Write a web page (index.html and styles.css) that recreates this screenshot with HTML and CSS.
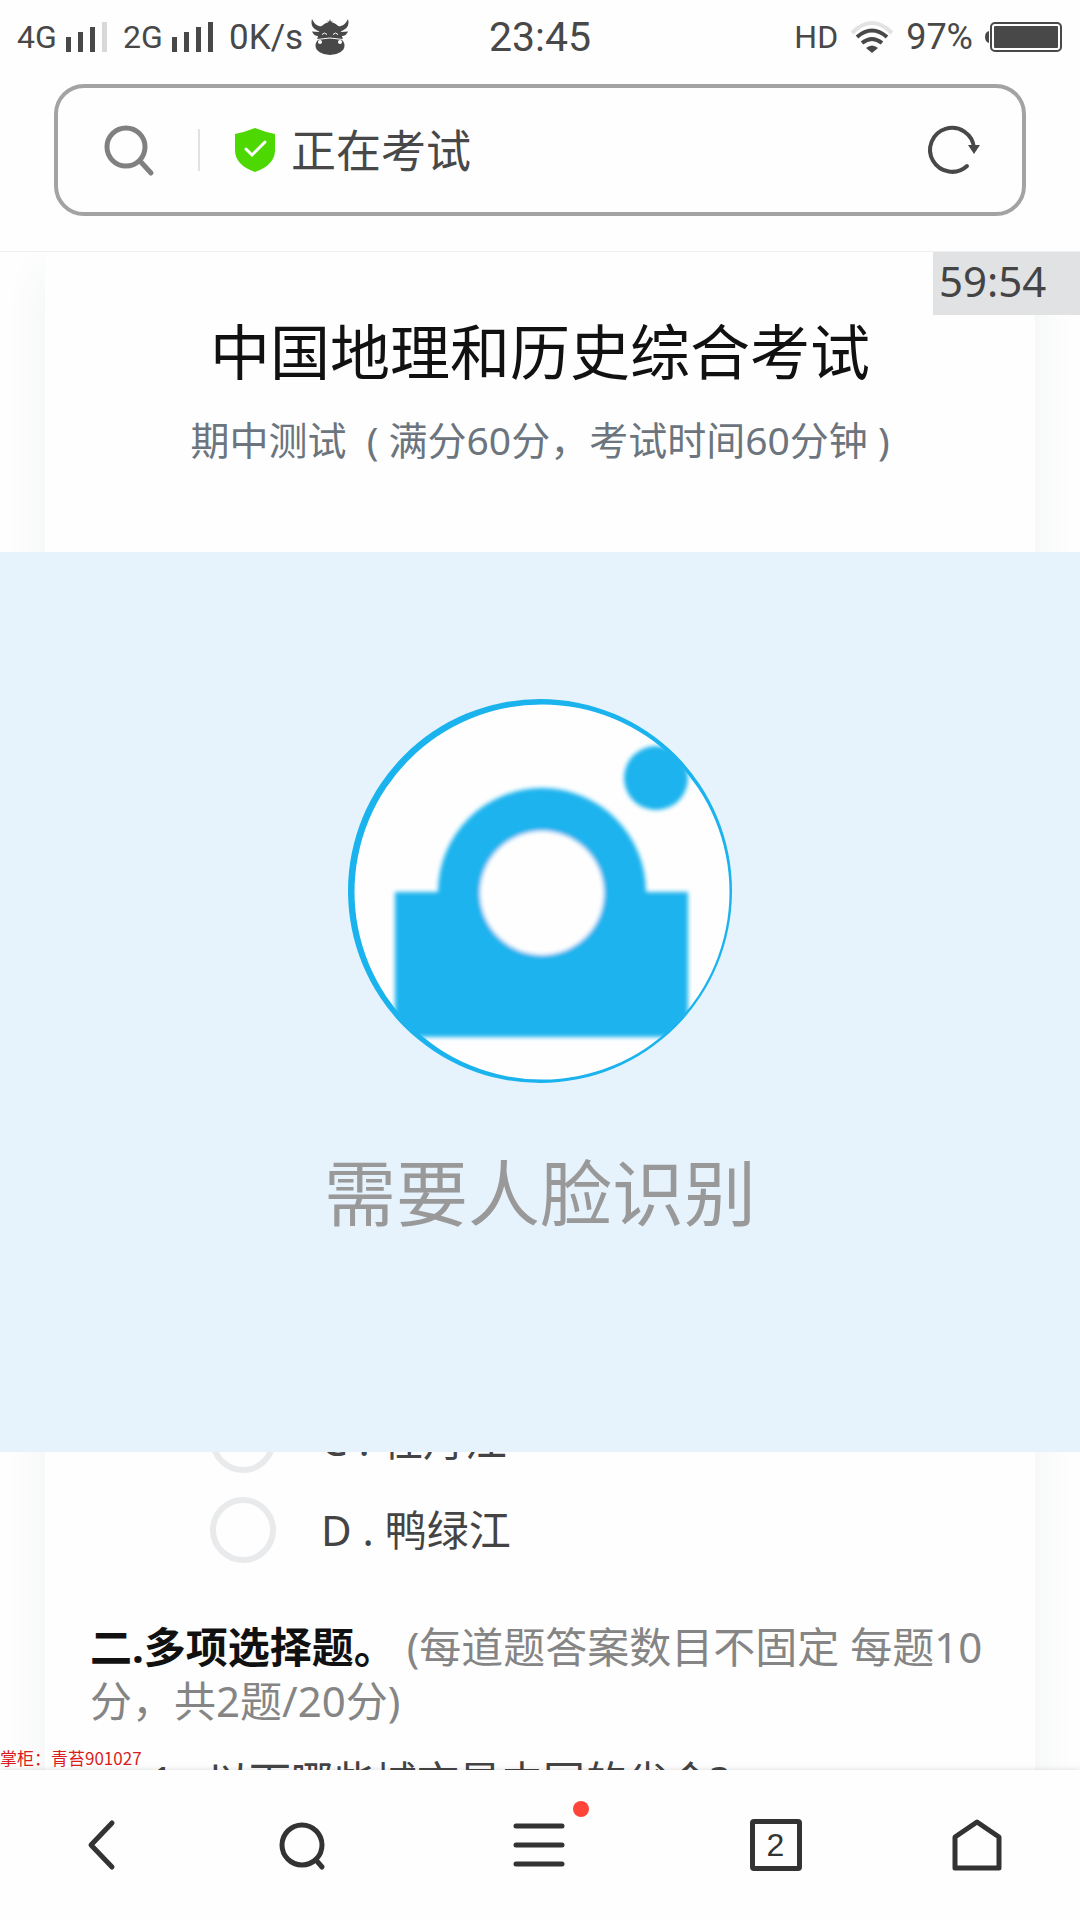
FILE: index.html
```html
<!DOCTYPE html>
<html lang="zh-CN">
<head>
<meta charset="utf-8">
<meta name="viewport" content="width=device-width, initial-scale=1">
<title>正在考试</title>
<link rel="stylesheet" href="styles.css">
</head>
<body>
<div class="page">
  <header class="browser">
    <div class="status">
      <div class="status-left">
        <span class="net">4G</span>
        <svg class="bars" viewBox="0 0 42 30" aria-hidden="true"><path d="M0 15h5v15H0zM12 10h5v20h-5zM24 5h5v25h-5z"/><path class="faint" d="M36 0h5v30h-5z"/></svg>
        <span class="net">2G</span>
        <svg class="bars" viewBox="0 0 42 30" aria-hidden="true"><path d="M0 15h5v15H0zM12 10h5v20h-5zM24 5h5v25h-5zM36 0h5v30h-5z"/></svg>
        <span class="speed-down">0K/s</span>
        <svg class="cow" viewBox="0 0 38 36" aria-hidden="true">
          <path d="M1 0C-1 7 3 11 10 13L13 7C7 8 4 6 1 0ZM37 0C39 7 35 11 28 13L25 7C31 8 34 6 37 0Z"/>
          <path d="M9 9Q13 4 17 3.500L16.500 1.500L18 3L19 0L20 3L21.500 1.500L21 3.500Q25 4 29 9L30 13L37 12.500Q35 17 31 17L32 21H6L7 17Q3 17 1 12.500L8 13Z"/>
          <ellipse cx="19" cy="26.500" rx="14.500" ry="9.500"/>
          <path class="cow-line" d="M11 15.500q2.500-3 5 0M22 15.500q2.500-3 5 0M6 20.500q13-3 26 0"/>
          <circle class="cow-hole" cx="9" cy="23" r="2"/><circle class="cow-hole" cx="29" cy="23" r="2"/>
        </svg>
      </div>
      <time class="clock">23:45</time>
      <div class="status-right">
        <span class="hd">HD</span>
        <svg class="wifi" viewBox="0 0 44 32" aria-hidden="true">
          <path class="arc faint-line" d="M2 12Q22-8 42 12"/>
          <path class="arc" d="M7 16Q22 3 37 16M12 22Q22 14 32 22"/>
          <path d="M16 27q6-5 12 0l-6 5z"/>
        </svg>
        <span class="charge">97%</span>
        <svg class="battery" viewBox="0 0 78 30" aria-hidden="true"><path d="M4 9v12Q0 20 0 15T4 9z"/><rect class="shell" x="6" y="1" width="70" height="28" rx="4"/><rect x="9" y="4" width="64" height="22" rx="1"/></svg>
      </div>
    </div>
    <form class="address">
      <button class="icon-btn" type="button" aria-label="搜索">
        <svg class="find" viewBox="0 0 50 50" aria-hidden="true"><circle cx="22" cy="22" r="19"/><path d="M36 36l11 12"/></svg>
      </button>
      <span class="divider"></span>
      <svg class="shield" viewBox="0 0 40 44" aria-hidden="true"><path class="shield-body" d="M20 0Q30 4 40 6V22Q40 37 20 44Q0 37 0 22V6Q10 4 20 0Z"/><path class="tick" d="M11 21l6 6L30 14"/></svg>
      <input class="address-text" type="text" value="正在考试" aria-label="地址栏">
      <button class="icon-btn" type="button" aria-label="刷新">
        <svg class="reload" viewBox="0 0 52 48" aria-hidden="true"><path class="ring" d="M39 40A22 22 0 1 1 46 22"/><path class="head" d="M40 19h12l-6 9z"/></svg>
      </button>
    </form>
  </header>

  <main class="viewport">
    <div class="timer">59:54</div>
    <article class="paper">
      <header class="paper-head">
        <h1 class="title">中国地理和历史综合考试</h1>
        <p class="subtitle">期中测试 &nbsp;( 满分60分，考试时间60分钟 )</p>
      </header>

      <section class="face">
        <svg class="camera" viewBox="0 0 384 384" aria-hidden="true">
          <defs>
            <clipPath id="disc"><circle cx="192" cy="192" r="192"/></clipPath>
            <filter id="soft"><feGaussianBlur stdDeviation="2"/></filter>
          </defs>
          <circle class="blue" cx="192" cy="192" r="192"/>
          <circle class="white" cx="194" cy="193" r="187.5"/>
          <g clip-path="url(#disc)"><g filter="url(#soft)">
            <path class="blue" d="M47 193H90A104 104 0 0 1 298 193H340V338H47Z"/>
            <circle class="white" cx="194" cy="194" r="62"/>
            <circle class="blue" cx="308" cy="79" r="32"/>
          </g></g>
        </svg>
        <p class="face-text">需要人脸识别</p>
      </section>

      <section class="options">
        <label class="option"><input class="radio" type="radio" name="q1"><span class="option-text">C . 牡丹江</span></label>
        <label class="option"><input class="radio" type="radio" name="q1"><span class="option-text">D . 鸭绿江</span></label>
      </section>

      <h2 class="part"><strong class="part-name">二.多项选择题。</strong> (每道题答案数目不固定 每题10分，共2题/20分)</h2>
      <p class="question">1 . 以下哪些城市是中国的省会?</p>
    </article>
    <div class="mark">掌柜：青苔901027</div>
  </main>

  <nav class="toolbar">
    <button class="tool" type="button" aria-label="返回"><svg class="tool-icon" viewBox="0 0 54 54" aria-hidden="true"><path d="M37 5L16 27L37 49"/></svg></button>
    <button class="tool" type="button" aria-label="搜索"><svg class="tool-icon" viewBox="0 0 54 54" aria-hidden="true"><circle cx="27" cy="27" r="20"/><path d="M41 42l6 7"/></svg></button>
    <button class="tool" type="button" aria-label="菜单"><span class="menu"><svg class="tool-icon" viewBox="0 0 54 54" aria-hidden="true"><path d="M4 8h46M4 27h46M4 46h46"/></svg><span class="dot"></span></span></button>
    <button class="tool" type="button" aria-label="标签页"><span class="tabs">2</span></button>
    <button class="tool" type="button" aria-label="主页"><svg class="tool-icon" viewBox="0 0 54 54" aria-hidden="true"><path d="M5 50V19L27 4L49 19V50Z"/></svg></button>
  </nav>
</div>
</body>
</html>
```
FILE: styles.css
```css
* { box-sizing: border-box; }

body {
  margin: 0;
  background: #fefefe;
  color: #444;
  font-family: "Noto Sans", "Noto Sans CJK SC", sans-serif;
}

h1, h2, p { margin: 0; font-weight: 400; }

button {
  display: grid;
  place-items: center;
  padding: 0;
  border: 0;
  background: none;
  color: inherit;
}

svg { display: block; flex: none; overflow: visible; }

.page { display: flex; flex-direction: column; height: 100vh; }

.browser { border-bottom: 1px solid #eee; padding-bottom: 35px; }

/* status bar */
.status {
  display: grid;
  grid-template-columns: 1fr auto 1fr;
  align-items: center;
  height: 76px;
  margin-bottom: 8px;
  padding: 0 17px 2px 17px;
  color: #484848;
  fill: #484848;
  font-family: Roboto, sans-serif;
}
.status-left, .status-right { display: flex; align-items: center; }
.status-right { justify-content: flex-end; gap: 12px; }
.net { font-size: 32px; width: 49px; }
.bars { width: 42px; height: 30px; margin-right: 15px; }
.faint { fill: #d8d8d8; }
.speed-down { font-size: 35px; }
.charge { font-size: 36px; }
.cow { width: 38px; height: 36px; margin-left: 8px; }
.cow-line { fill: none; stroke: #fefefe; stroke-width: 1; }
.cow-hole { fill: #fefefe; }
.clock { font-size: 41px; }
.hd { font-size: 32px; }
.wifi { width: 44px; height: 32px; }
.arc { fill: none; stroke: #484848; stroke-width: 4; }
.faint-line { stroke: #e2e2e2; }
.battery { width: 78px; height: 30px; }
.shell { fill: none; stroke: #484848; stroke-width: 2; }

/* address bar */
.address {
  display: flex;
  align-items: center;
  height: 132px;
  margin: 0 54px;
  padding: 0 42px 0 46px;
  border: 4px solid #a3a3a3;
  border-radius: 30px;
}
.find { width: 50px; height: 50px; fill: none; stroke: #808080; stroke-width: 5; stroke-linecap: round; }
.divider { width: 2px; height: 42px; margin: 0 35px 0 44px; background: #e2e2e2; }
.shield { width: 40px; height: 44px; }
.shield-body { fill: #4cd800; }
.tick { fill: none; stroke: #fff; stroke-width: 3; stroke-linecap: round; }
.address-text {
  flex: 1;
  min-width: 0;
  height: 70px;
  margin: 0 16px;
  padding: 0 0 4px;
  border: 0;
  outline: 0;
  background: none;
  color: #484848;
  font: 45px/66px "Noto Sans CJK SC", sans-serif;
}
.reload { width: 52px; height: 48px; }
.ring { fill: none; stroke: #484848; stroke-width: 4; stroke-linecap: round; }
.head { fill: #484848; }

/* exam page */
.viewport { position: relative; flex: 1; min-height: 0; overflow: hidden; }
.timer {
  position: absolute;
  top: 0;
  right: 0;
  z-index: 1;
  width: 147px;
  padding: 0 0 5px 6px;
  background: #e1e2e4;
  font-size: 42px;
  line-height: 58px;
}
.paper {
  min-height: 100%;
  margin: 0 45px;
  background: #fefefe;
  box-shadow: 0 20px 40px rgba(60, 80, 80, 0.07);
}
.paper-head { height: 300px; padding-top: 55px; text-align: center; }
.title { color: #111; font-size: 60px; line-height: 90px; }
.subtitle { color: #6c757d; font-size: 39px; line-height: 86px; }

.face {
  position: relative;
  display: flex;
  flex-direction: column;
  align-items: center;
  gap: 56px;
  height: 900px;
  margin: 0 -45px;
  padding-top: 147px;
  background: #e6f3fd;
}
.camera { width: 384px; height: 384px; }
.blue { fill: #1ab3ee; }
.white { fill: #fefefe; }
.face-text { color: #999; font-size: 72px; line-height: 106px; }

/* the first row starts behind the face panel */
.options { margin: -57px 0 0 165px; }
.option { display: flex; align-items: center; gap: 45px; height: 90px; font-size: 42px; }
.option-text { padding-bottom: 6px; }
.radio {
  appearance: none;
  flex: none;
  width: 66px;
  height: 66px;
  margin: 0;
  border: 6px solid #e9eaec;
  border-radius: 50%;
}

.part {
  margin: 45px 45px 0;
  color: #858585;
  font-size: 42px;
  line-height: 54px;
}
.part-name { color: #111; font-weight: 700; }
.question { margin: 26px 0 0 105px; font-size: 42px; line-height: 54px; }

.mark {
  position: absolute;
  left: 0;
  bottom: 0;
  color: #d81e1e;
  font: 17px/24px "Noto Sans CJK SC", sans-serif;
}

/* bottom toolbar */
.toolbar {
  position: relative;
  display: grid;
  grid-template-columns: 203fr 198fr 276fr 197fr 206fr;
  height: 150px;
  background: #fefefe;
  box-shadow: 0 0 6px rgba(0, 0, 0, 0.14);
  color: #333;
}
.tool-icon {
  width: 54px;
  height: 54px;
  fill: none;
  stroke: #333;
  stroke-width: 5;
  stroke-linecap: round;
  stroke-linejoin: round;
}
.menu { position: relative; }
.dot {
  position: absolute;
  top: -17px;
  right: -23px;
  width: 16px;
  height: 16px;
  border-radius: 50%;
  background: #ff443a;
}
.tabs {
  width: 52px;
  height: 52px;
  border: 5px solid #333;
  border-radius: 4px;
  font: 32px/42px "Liberation Sans", sans-serif;
  text-align: center;
}
```
